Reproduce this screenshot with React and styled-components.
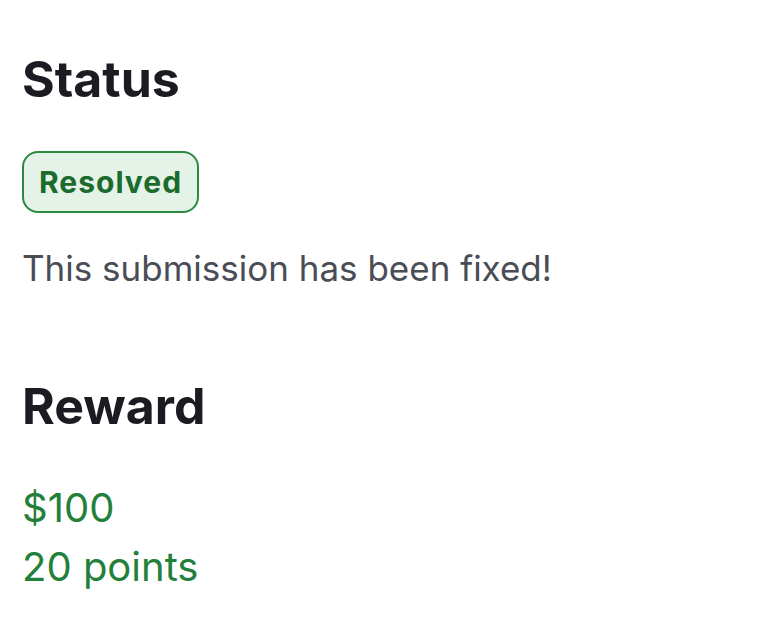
import React from 'react';
import styled, { createGlobalStyle } from 'styled-components';

const GlobalStyle = createGlobalStyle`
  body {
    margin: 0;
    background: #fff;
    font-family: Inter, "Noto Sans", sans-serif;
  }
`

const Page = styled.div`
  padding: 49px 22px;
  display: flex;
  flex-direction: column;
`

const Section = styled.section`
  display: flex;
  flex-direction: column;
  align-items: flex-start;
  margin-bottom: ${props => props.last ? '0' : '78px'};
`

const Heading = styled.h2`
  margin: 0 0 42px;
  font-size: 50px;
  font-weight: 700;
  line-height: 60px;
  color: #1a1c21;
`

const Badge = styled.span`
  display: inline-flex;
  align-items: center;
  box-sizing: border-box;
  height: 62px;
  padding: 0 15px;
  border: 2px solid #2a8a3e;
  border-radius: 16px;
  background: #e5f2e8;
  color: #1a6b2c;
  font-size: 30px;
  font-weight: 700;
  letter-spacing: 1px;
  margin-bottom: 26px;
`

const Text = styled.p`
  margin: 0;
  font-size: ${props => props.green ? '40px' : '35px'};
  line-height: 59px;
  color: ${props => props.green ? '#23803a' : '#4a4d55'};
`

export default function App() {
  return (
    <>
      <GlobalStyle />
      <Page>
        <Section>
          <Heading>Status</Heading>
          <Badge>Resolved</Badge>
          <Text>This submission has been fixed!</Text>
        </Section>
        <Section last>
          <Heading>Reward</Heading>
          <Text green>$100</Text>
          <Text green>20 points</Text>
        </Section>
      </Page>
    </>
  )
}
